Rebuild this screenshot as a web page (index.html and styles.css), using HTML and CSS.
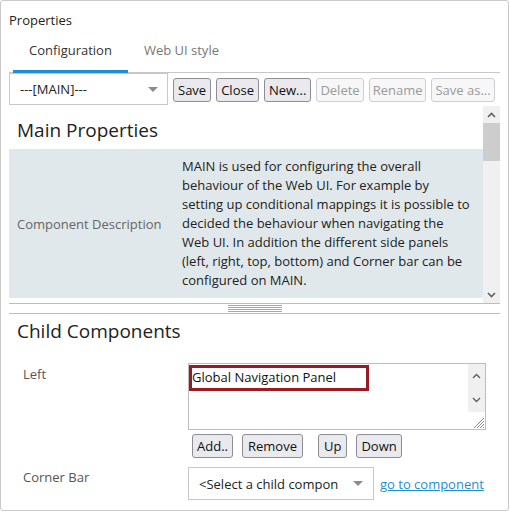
FILE: index.html
```html
<!DOCTYPE html>
<html>
<head>
<meta charset="utf-8">
<link rel="stylesheet" href="styles.css">
</head>
<body>
<div class="panel">
  <div class="title">Properties</div>
  <div class="tabs">
    <div class="tab active">Configuration</div>
    <div class="tab">Web UI style</div>
  </div>
  <div class="toolbar">
    <div class="select main-select"><span>---[MAIN]---</span><span class="caret"></span></div>
    <button class="btn">Save</button>
    <button class="btn">Close</button>
    <button class="btn">New...</button>
    <button class="btn disabled">Delete</button>
    <button class="btn disabled">Rename</button>
    <button class="btn disabled">Save as...</button>
  </div>
  <div class="scroll">
    <div class="scroll-content">
      <h2 class="heading">Main Properties</h2>
      <div class="desc-row">
        <div class="desc-label">Component Description</div>
        <div class="desc-text">MAIN is used for configuring the overall behaviour of the Web UI. For example by setting up conditional mappings it is possible to decided the behaviour when navigating the Web UI. In addition the different side panels (left, right, top, bottom) and Corner bar can be configured on MAIN.</div>
      </div>
    </div>
    <div class="vscroll">
      <div class="sb-btn"><svg width="9" height="6" viewBox="0 0 9 6"><path d="M1 5 L4.5 1.5 L8 5" fill="none" stroke="#606060" stroke-width="1.6"/></svg></div>
      <div class="sb-track"><div class="sb-thumb"></div></div>
      <div class="sb-btn"><svg width="9" height="6" viewBox="0 0 9 6"><path d="M1 1 L4.5 4.5 L8 1" fill="none" stroke="#606060" stroke-width="1.6"/></svg></div>
    </div>
  </div>
  <div class="splitter"><div class="grip"></div></div>
  <h2 class="heading child-heading">Child Components</h2>
  <div class="field">
    <div class="field-label">Left</div>
    <div class="field-body">
      <div class="listbox">
        <div class="list-items">
          <div class="list-item">Global Navigation Panel</div>
        </div>
        <div class="list-scroll">
          <div class="ls-btn"><svg width="9" height="6" viewBox="0 0 9 6"><path d="M1 5 L4.5 1.5 L8 5" fill="none" stroke="#606060" stroke-width="1.4"/></svg></div>
          <div class="ls-btn"><svg width="9" height="6" viewBox="0 0 9 6"><path d="M1 1 L4.5 4.5 L8 1" fill="none" stroke="#606060" stroke-width="1.4"/></svg></div>
          <div class="ls-grip"><svg width="13" height="13" viewBox="0 0 13 13"><path d="M12 2 L2 12 M12 5 L5 12 M12 8 L8 12 M12 11 L11 12" stroke="#8a8a8a" stroke-width="1"/></svg></div>
        </div>
      </div>
      <div class="list-buttons">
        <button class="btn">Add..</button>
        <button class="btn wide">Remove</button>
        <button class="btn wide gap-left">Up</button>
        <button class="btn">Down</button>
      </div>
    </div>
  </div>
  <div class="field corner">
    <div class="field-label">Corner Bar</div>
    <div class="field-body row">
      <div class="select child-select"><span>&lt;Select a child compon</span><span class="caret"></span></div>
      <a class="link" href="#">go to component</a>
    </div>
  </div>
</div>
</body>
</html>
```

FILE: styles.css
```css
* { box-sizing: border-box; }
html, body { margin: 0; padding: 0; background: #fff; }
body {
  font-family: "Open Sans", "Noto Sans", sans-serif;
  font-size: 13px;
  color: #222;
}
.panel {
  width: 509px;
  height: 511px;
  border: 1px solid #c9c9c9;
  border-radius: 3px;
  padding: 9px 8px 0 8px;
  overflow: hidden;
}
.title {
  line-height: 20px;
  height: 21px;
  color: #222;
}
.tabs {
  display: flex;
  padding-left: 4px;
  border-bottom: 1px solid #c8c8c8;
}
.tab {
  padding: 9px 16px 10px;
  line-height: 20px;
  color: #777;
  border-bottom: 3px solid transparent;
  margin-bottom: -1px;
}
.tab.active {
  color: #333;
  border-bottom-color: #1e8fd3;
}
.toolbar {
  display: flex;
  align-items: flex-start;
  gap: 5px;
  height: 33px;
}
.select {
  display: flex;
  align-items: center;
  justify-content: space-between;
  border: 1px solid #c8c8c8;
  background: #fff;
  color: #222;
  flex: none;
  white-space: nowrap;
}
.main-select {
  width: 159px;
  height: 32px;
  padding: 0 9px 0 10px;
}
.caret {
  width: 0;
  height: 0;
  border-left: 5px solid transparent;
  border-right: 5px solid transparent;
  border-top: 5px solid #8c8c8c;
}
.btn {
  font-family: inherit;
  font-size: 13px;
  height: 24px;
  margin-top: 5px;
  padding: 0 4px;
  border: 1px solid #8d8d96;
  border-radius: 3px;
  background: #e9e9ee;
  color: #111;
  line-height: 20px;
  white-space: nowrap;
  flex: none;
}
.btn.disabled {
  padding: 0 3px;
  border-color: #cfcfd3;
  background: #f7f7f7;
  color: #9a9a9a;
}
.scroll {
  display: flex;
  height: 198px;
  border-bottom: 1px solid #bdbdbd;
}
.scroll-content {
  flex: 1;
  overflow: hidden;
}
.heading {
  margin: 0;
  font-weight: normal;
  font-size: 19px;
  line-height: 28px;
  color: #222;
  padding-left: 8px;
}
.scroll-content .heading {
  padding-top: 10px;
  height: 43px;
}
.desc-row {
  display: flex;
  align-items: center;
  background: #e1e8eb;
  height: 149px;
}
.desc-label {
  width: 173px;
  padding-left: 8px;
  color: #666;
  flex: none;
}
.desc-text {
  width: 290px;
  flex: none;
  line-height: 19px;
}
.vscroll {
  width: 17px;
  display: flex;
  flex-direction: column;
  background: #f0f0f0;
}
.sb-btn {
  height: 17px;
  display: flex;
  align-items: center;
  justify-content: center;
}
.sb-track { flex: 1; }
.sb-thumb {
  height: 38px;
  background: #cdcdcd;
}
.splitter {
  height: 10px;
  border-bottom: 1px solid #bdbdbd;
  display: flex;
  justify-content: center;
  padding-top: 1px;
}
.grip {
  width: 54px;
  height: 7px;
  background: repeating-linear-gradient(to bottom, #a8a8a8 0, #a8a8a8 1px, transparent 1px, transparent 2px);
}
.child-heading {
  padding-top: 3px;
  height: 49px;
}
.field {
  display: flex;
  padding-left: 14px;
}
.field-label {
  width: 165px;
  flex: none;
  color: #555;
  padding-top: 1px;
  line-height: 20px;
}
.listbox {
  width: 298px;
  height: 67px;
  border: 1px solid #bdbdbd;
  display: flex;
}
.list-items {
  flex: 1;
  padding: 1px 0 0 0;
}
.list-item {
  width: 180px;
  height: 26px;
  border: 3px solid #9b1b24;
  line-height: 19px;
  color: #111;
}
.list-scroll {
  width: 17px;
  display: flex;
  flex-direction: column;
}
.ls-btn {
  background: #f0f0f0;
  height: 24px;
  display: flex;
  align-items: center;
  justify-content: center;
}
.ls-grip {
  flex: 1;
  display: flex;
  align-items: flex-end;
  justify-content: flex-end;
}
.list-buttons {
  display: flex;
  gap: 9px;
  padding-left: 4px;
  height: 37px;
}
.list-buttons .btn { margin-top: 4px; }
.list-buttons .wide { padding: 0 5px; }
.gap-left { margin-left: 6px; }
.corner .field-label { padding-top: 0; }
.row {
  display: flex;
  align-items: center;
  gap: 6px;
}
.child-select {
  width: 186px;
  height: 33px;
  padding: 0 10px 0 10px;
}
.link {
  color: #1e8fd3;
  text-decoration: underline;
}
```
